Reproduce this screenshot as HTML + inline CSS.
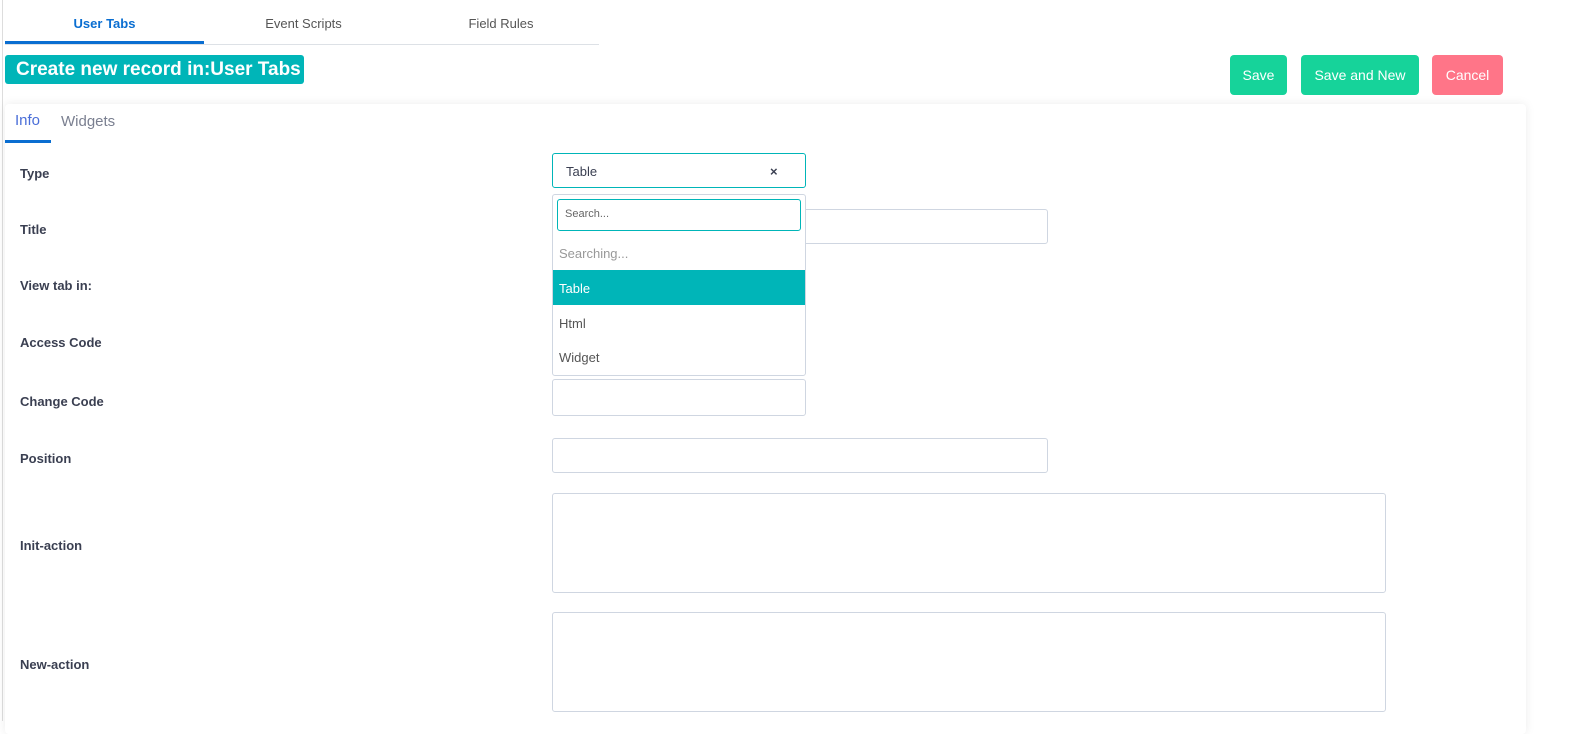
<!DOCTYPE html>
<html><head><style>
*{box-sizing:border-box;margin:0;padding:0}
body{width:1580px;height:721px;overflow:hidden;background:#fff;font-family:"Liberation Sans",sans-serif;position:relative;color:#3a3f51}
.a{position:absolute}
.lbl{position:absolute;left:20px;font-size:13px;font-weight:bold;color:#3a3f51}
.inp{position:absolute;border:1px solid #cfd6e1;border-radius:3px;background:#fff}
.btn{position:absolute;top:55px;height:40px;border-radius:4px;color:#fff;font-size:14px;text-align:center;line-height:40px}
</style></head><body>
<div class="a" style="left:2px;top:0;width:1px;height:721px;background:#ddd"></div>
<div class="a" style="left:5px;top:44px;width:594px;height:1px;background:#dde1e6"></div>
<div class="a" style="left:5px;top:41px;width:199px;height:3px;background:#0a6ed1"></div>
<div class="a" style="left:5px;top:16px;width:199px;text-align:center;font-size:13px;font-weight:bold;color:#0a6ed1">User Tabs</div>
<div class="a" style="left:204px;top:16px;width:199px;text-align:center;font-size:13px;color:#555">Event Scripts</div>
<div class="a" style="left:403px;top:16px;width:196px;text-align:center;font-size:13px;color:#555">Field Rules</div>
<div class="a" style="left:5px;top:55px;width:299px;height:29px;background:#00b5b8;border-radius:3px;color:#fff;font-size:19px;font-weight:bold;line-height:29px;padding-left:11px">Create new record in:User Tabs</div>
<div class="btn" style="left:1230px;width:57px;background:#16d39a">Save</div>
<div class="btn" style="left:1301px;width:118px;background:#16d39a">Save and New</div>
<div class="btn" style="left:1432px;width:71px;background:#ff7588">Cancel</div>
<div class="a" style="left:5px;top:104px;width:1521px;height:630px;background:#fff;box-shadow:0 0 10px rgba(0,0,0,.08);border-radius:4px"></div>
<div class="a" style="left:15px;top:112px;font-size:15px;color:#4a6ed8">Info</div>
<div class="a" style="left:61px;top:113px;font-size:15px;color:#7a7f90">Widgets</div>
<div class="a" style="left:5px;top:140px;width:46px;height:3px;background:#0a6ed1"></div>
<div class="lbl" style="top:166px">Type</div>
<div class="lbl" style="top:222px">Title</div>
<div class="lbl" style="top:278px">View tab in:</div>
<div class="lbl" style="top:335px">Access Code</div>
<div class="lbl" style="top:394px">Change Code</div>
<div class="lbl" style="top:451px">Position</div>
<div class="lbl" style="top:538px">Init-action</div>
<div class="lbl" style="top:657px">New-action</div>
<div class="inp" style="left:552px;top:153px;width:254px;height:35px;border-color:#00b5b8"></div>
<div class="a" style="left:566px;top:164px;font-size:13px;color:#3a3f51">Table</div>
<div class="a" style="left:770px;top:164px;font-size:13px;font-weight:bold;color:#3a3f51">×</div>
<div class="inp" style="left:552px;top:209px;width:496px;height:35px"></div>
<div class="inp" style="left:552px;top:379px;width:254px;height:37px"></div>
<div class="inp" style="left:552px;top:438px;width:496px;height:35px"></div>
<div class="inp" style="left:552px;top:493px;width:834px;height:100px"></div>
<div class="inp" style="left:552px;top:612px;width:834px;height:100px"></div>
<div class="inp" style="left:552px;top:194px;width:254px;height:182px"></div>
<div class="inp" style="left:557px;top:199px;width:244px;height:32px;border-color:#00b5b8"></div>
<div class="a" style="left:565px;top:208px;font-size:11px;color:#666">Search...</div>
<div class="a" style="left:559px;top:246px;font-size:13px;color:#999">Searching...</div>
<div class="a" style="left:553px;top:270px;width:252px;height:35px;background:#00b5b8"></div>
<div class="a" style="left:559px;top:281px;font-size:13px;color:#fff">Table</div>
<div class="a" style="left:559px;top:316px;font-size:13px;color:#555">Html</div>
<div class="a" style="left:559px;top:350px;font-size:13px;color:#555">Widget</div>
</body></html>
